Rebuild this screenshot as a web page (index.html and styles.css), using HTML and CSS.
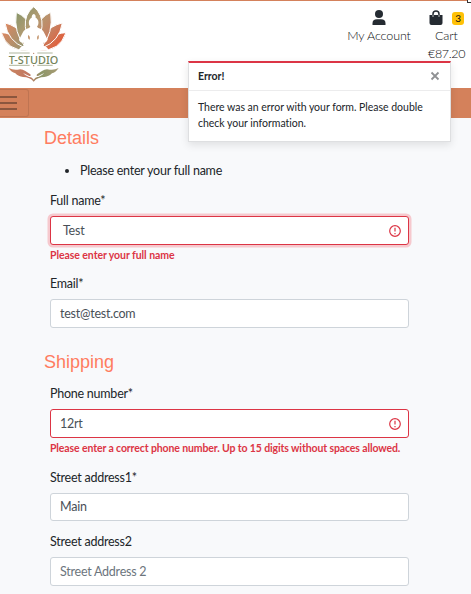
FILE: index.html
```html
<!DOCTYPE html>
<html lang="en">
<head>
<meta charset="utf-8">
<title>T-Studio checkout</title>
<link rel="stylesheet" href="styles.css">
</head>
<body>
<header class="top">
  <svg class="logo" viewBox="0 3 201 249" role="img" aria-label="T-Studio">
    <defs>
      <linearGradient id="petals" gradientUnits="userSpaceOnUse" x1="40" y1="40" x2="165" y2="145">
        <stop offset="0" stop-color="#85956a"/><stop offset=".4" stop-color="#b39b72"/><stop offset=".7" stop-color="#c48465"/><stop offset="1" stop-color="#e0603c"/>
      </linearGradient>
      <linearGradient id="left" x1="0" y1="0" x2="1" y2="1">
        <stop offset="0" stop-color="#dc8660"/><stop offset="1" stop-color="#929873"/>
      </linearGradient>
      <linearGradient id="hands" x1="0" x2="1">
        <stop offset="0" stop-color="#c98460"/><stop offset=".4" stop-color="#c27660"/><stop offset=".65" stop-color="#8c9668"/><stop offset="1" stop-color="#a99b74"/>
      </linearGradient>
    </defs>
    <g stroke="#fff" stroke-width="3">
      <path fill="url(#left)" d="M4 98Q31 97 62 125Q77 137 83 151Q22 154 4 98Z"/>
      <path fill="url(#petals)" d="M198 98Q169 98 142 123Q125 137 119 151Q179 154 198 98Z"/>
      <path fill="url(#left)" d="M15 69Q48 76 67 104L74 143Q24 124 15 69Z"/>
      <path fill="url(#petals)" d="M187 69Q153 76 134 104L128 143Q178 124 187 69Z"/>
      <path fill="url(#petals)" d="M49 37Q83 52 91 84Q91 116 76 141Q40 99 49 37Z"/>
      <path fill="url(#petals)" d="M152 37Q119 52 111 84Q111 116 125 141Q161 99 152 37Z"/>
      <path fill="url(#petals)" d="M101 20Q129 43 126 80Q122 119 101 141Q80 119 76 80Q73 43 101 20Z"/>
    </g>
    <path fill="#fff" d="M101 42C108 44 107 51 107 53C118 59 117 73 111 80L115 84Q129 88 134 101L143 119Q139 129 130 128L131 138Q144 140 145 151H57Q58 140 71 137L71 128Q60 129 57 119L68 98Q73 88 87 84L91 80C85 73 84 59 95 53C95 48 97 43 101 42Z"/>
    <path fill="#c69871" d="M84 105Q92 109 89 119Q83 119 84 105ZM116 105Q109 109 112 119Q118 119 116 105Z"/>
    <path fill="none" stroke="#87936d" stroke-width="2" d="M27 159H89M112 159H158M27 196H89M112 196H158"/>
    <g fill="#b77e60"><circle cx="101" cy="160" r="2"/><circle cx="101" cy="197" r="2"/></g>
    <text class="logo-text" x="26" y="191" textLength="149" lengthAdjust="spacingAndGlyphs">T-STUDIO</text>
    <path fill="url(#hands)" d="M26 204Q39 211 53 209Q65 205 76 213L91 223Q95 229 88 228L69 219Q76 227 87 231Q95 229 101 239Q107 229 115 231Q126 227 133 219L114 228Q107 229 111 223L126 213Q137 205 149 209Q163 211 176 204Q166 218 156 220Q147 230 133 231Q113 231 101 245Q90 231 69 231Q55 230 46 220Q34 217 26 204Z"/>
  </svg>
  <div class="account">
    <svg class="user" viewBox="0 0 14 16"><circle cx="7" cy="4" r="4"/><path d="M.5 15v-1.500Q.5 9.300 5 9.300h4q4.500 0 4.500 4.200V15Z"/></svg>
    <span>My Account</span>
  </div>
  <div class="cart">
    <div class="cart-icons">
      <svg class="bag" viewBox="0 0 14 16"><path d="M.5 5h13v8q0 2-2 2h-9q-2 0-2-2Z"/><path class="handle" d="M4 7V4a3 3 0 0 1 6 0v3"/><path class="notch" d="M4 5v2M10 5v2"/></svg>
      <b class="badge">3</b>
    </div>
    <span class="cart-label">Cart</span>
    <span class="total">€87.20</span>
  </div>
  <i class="corner"></i>
</header>
<nav class="bar"><button class="toggler" aria-label="Menu"><i></i><i></i><i></i></button></nav>
<main class="form">
  <h2>Details</h2>
  <ul><li>Please enter your full name</li></ul>
  <label>Full name*</label>
  <div class="input invalid focus"><span>Test</span><svg class="warn" viewBox="0 0 12 12"><circle cx="6" cy="6" r="5.300"/><path d="M6 2.800v3.600M6 7.900v1.300"/></svg></div>
  <strong class="error">Please enter your full name</strong>
  <label>Email*</label>
  <div class="input"><span>test@test.com</span></div>
  <h2 class="shipping">Shipping</h2>
  <label>Phone number*</label>
  <div class="input invalid"><span>12rt</span><svg class="warn" viewBox="0 0 12 12"><circle cx="6" cy="6" r="5.300"/><path d="M6 2.800v3.600M6 7.900v1.300"/></svg></div>
  <strong class="error long">Please enter a correct phone number. Up to 15 digits without spaces allowed.</strong>
  <label>Street address1*</label>
  <div class="input short"><span>Main</span></div>
  <label>Street address2</label>
  <div class="input"><span class="placeholder">Street Address 2</span></div>
</main>
<aside class="toast">
  <div class="toast-head"><strong>Error!</strong><svg class="close" viewBox="0 0 10 10"><path d="M1.500 1.500l7 7M8.500 1.500l-7 7"/></svg></div>
  <p>There was an error with your form. Please double<br>check your information.</p>
</aside>
</body>
</html>
```
FILE: styles.css
```css
* { box-sizing: border-box; }
body { margin: 0; height: 594px; overflow: hidden; background: #f8f9fb; color: #212529; font: 12.5px/18px Lato, sans-serif; letter-spacing: -.24px; }
.top { position: relative; display: flex; height: 88px; border-top: 1px solid #d4815b; background: #fff; color: #0b0e11; font-weight: 300; letter-spacing: -.1px; }
.logo { width: 67px; height: 83px; flex: none; letter-spacing: 0; }
.logo-text { font: 500 34px "Noto Sans", sans-serif; fill: #74845a; }
.account { width: 66px; flex: none; margin-left: auto; padding-top: 9px; display: flex; flex-direction: column; align-items: center; white-space: nowrap; }
.user, .bag { flex: none; width: 14px; height: 16px; fill: #252b32; }
.account span { margin-top: 1px; }
.cart { display: flex; flex-direction: column; flex: none; width: 59px; padding-top: 9px; }
.cart-icons { display: flex; padding-left: 17px; height: 17px; }
.badge { width: 12px; height: 13px; margin: 2px 0 0 9px; border-radius: 3px; background: #ffc107; font-size: 10px; font-weight: 400; line-height: 13px; text-align: center; }
.cart-label { margin-left: 23px; }
.total { margin-left: 16px; letter-spacing: -.35px; }
.handle { fill: none; stroke: #252b32; stroke-width: 1.5; }
.notch { fill: none; stroke: #fff; stroke-width: .7; }
.corner { position: absolute; top: -1px; right: 0; width: 4px; height: 3px; border: solid #333; border-width: 0 0 1px 1px; background: #fff; }
.bar { display: flow-root; height: 30px; background: #d4815b; }
.toggler { display: flex; flex-direction: column; gap: 4px; width: 29px; height: 28px; margin: 1px 0; padding: 6px 0 0; border: 1px solid #bf7452; border-left: 0; border-radius: 0 3px 3px 0; background: none; }
.toggler i { width: 17px; height: 2px; background: #8b563e; }
.form { width: 359px; margin-left: 50px; }
h2 { margin: 9px 0 13px -6px; height: 22px; color: #ff7c60; font: 18px/22px "Liberation Sans", sans-serif; letter-spacing: 0; }
ul { margin: 0 0 12px; padding-left: 30px; height: 18px; }
label { display: block; height: 18px; margin-bottom: 6px; }
.input { display: flex; align-items: center; justify-content: space-between; height: 29px; padding: 0 7px 0 9px; border: 1px solid #ced4da; border-radius: 3px; background: #fff; color: #495057; }
.short { height: 28px; margin-bottom: 12px; }
.invalid { border-color: #dc3545; }
.focus { padding-left: 12px; box-shadow: 0 0 0 2.5px #f6c9ce; }
.warn { width: 12px; height: 12px; fill: none; stroke: #dc3545; stroke-width: 1.2; }
.placeholder { color: #6c757d; }
.error { display: block; height: 18px; margin: 1px 0 11px; color: #dc3545; font-size: 10.5px; font-weight: 700; letter-spacing: -.07px; white-space: nowrap; }
.error.long { letter-spacing: -.12px; margin-bottom: 12px; }
.shipping { margin: 23px 0 12px -6px; }
.toast { position: absolute; left: 188px; top: 61px; width: 263px; height: 81px; border: 1px solid #dedfe1; border-top: 2px solid #dc3545; background: #fff; box-shadow: 0 3px 8px rgba(0,0,0,.1); font-size: 10.5px; line-height: 16px; letter-spacing: -.02px; }
.toast-head { display: flex; align-items: center; justify-content: space-between; height: 28px; padding: 0 10px 2px 9px; border-bottom: 1px solid #ececed; }
.toast-head strong { font-weight: 700; }
.close { width: 10px; height: 10px; stroke: #8f9193; stroke-width: 1.8; }
.toast p { margin: 8px 9px; white-space: nowrap; }
```
